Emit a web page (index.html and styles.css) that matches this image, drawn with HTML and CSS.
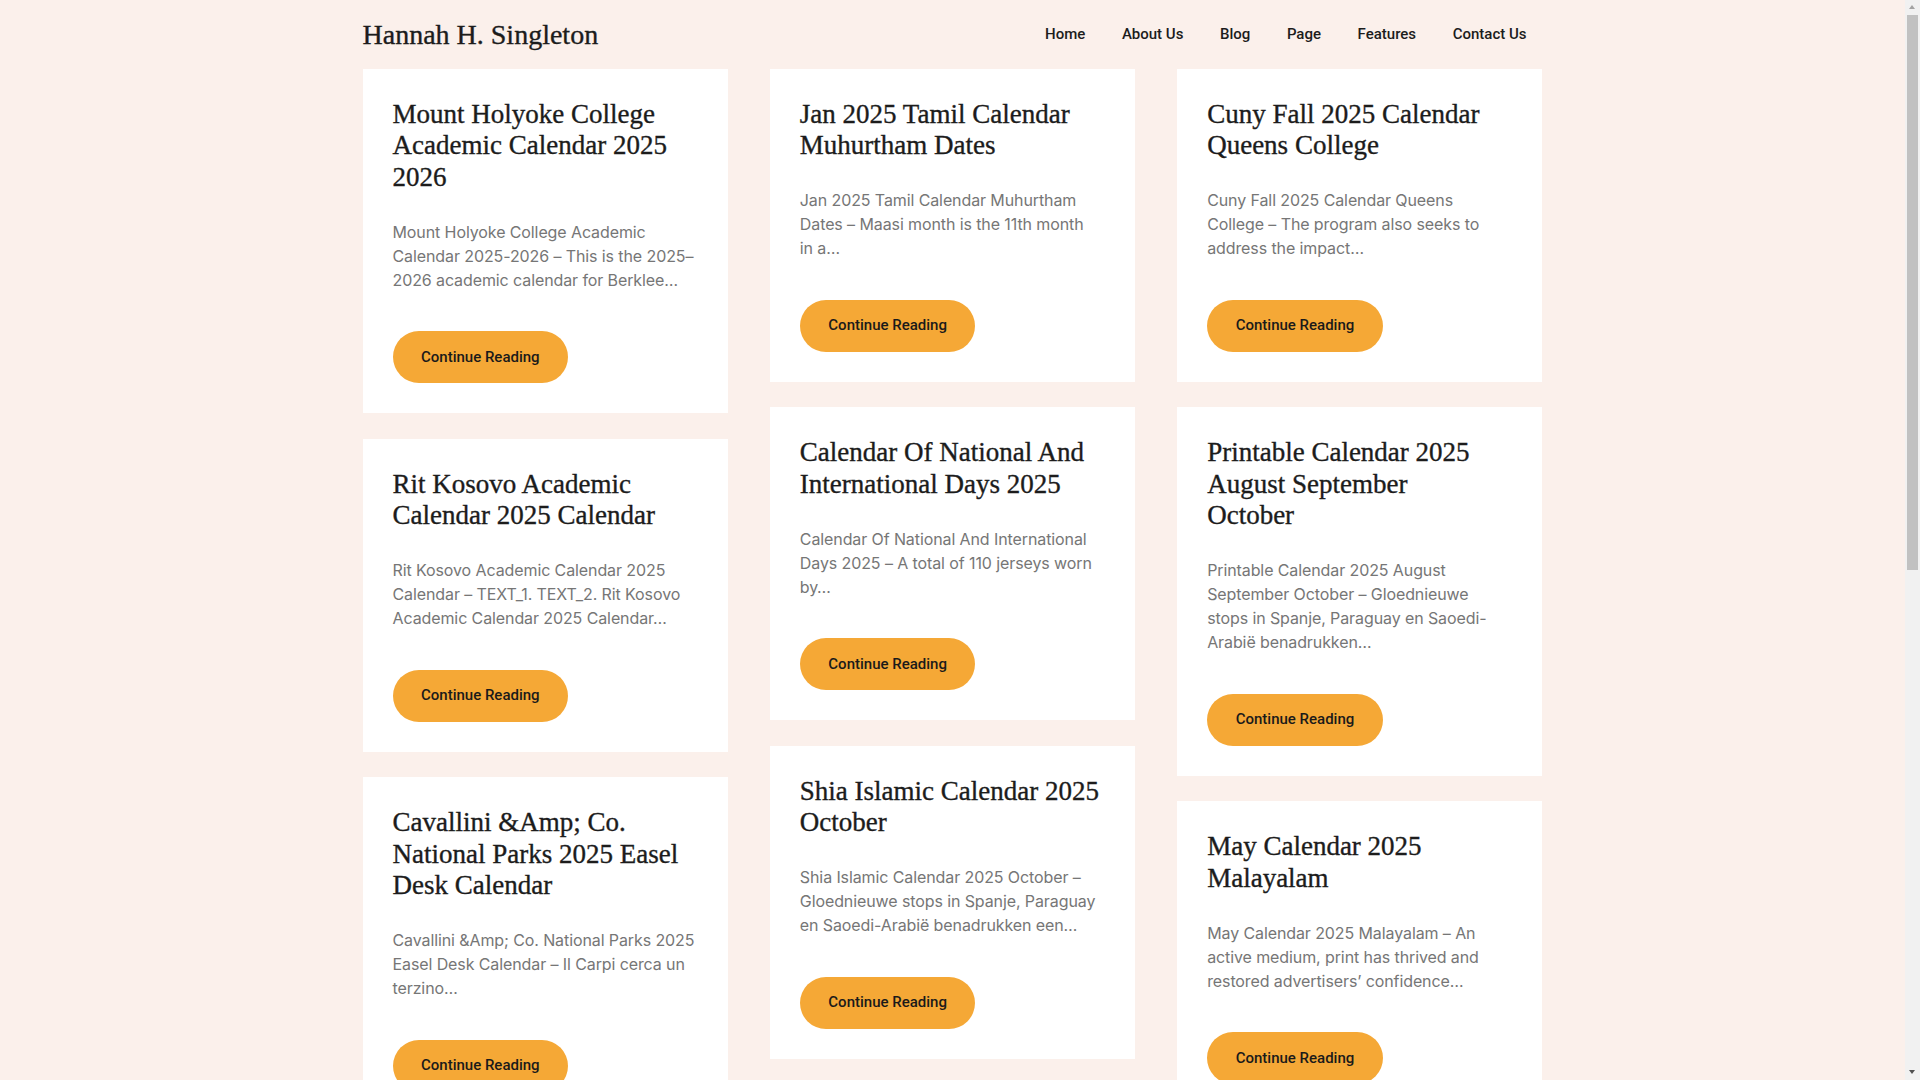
FILE: index.html
```html
<!DOCTYPE html>
<html lang="en">
<head>
<meta charset="utf-8">
<title>Hannah H. Singleton</title>
<link rel="stylesheet" href="styles.css">
</head>
<body>
<header class="site-header">
  <div class="container header-inner">
    <a class="site-title" href="#">Hannah H. Singleton</a>
    <nav class="main-nav">
      <a href="#">Home</a>
      <a href="#">About Us</a>
      <a href="#">Blog</a>
      <a href="#">Page</a>
      <a href="#">Features</a>
      <a href="#">Contact Us</a>
    </nav>
  </div>
</header>
<main class="container posts">
  <div class="col">
    <article class="card">
      <h2 class="card-title">Mount Holyoke College Academic Calendar 2025 2026</h2>
      <p class="excerpt">Mount Holyoke College Academic Calendar 2025-2026 – This is the 2025–2026 academic calendar for Berklee…</p>
      <a class="btn" href="#">Continue Reading</a>
    </article>
    <article class="card">
      <h2 class="card-title">Rit Kosovo Academic Calendar 2025 Calendar</h2>
      <p class="excerpt">Rit Kosovo Academic Calendar 2025 Calendar – TEXT_1. TEXT_2. Rit Kosovo Academic Calendar 2025 Calendar…</p>
      <a class="btn" href="#">Continue Reading</a>
    </article>
    <article class="card">
      <h2 class="card-title">Cavallini &amp;Amp; Co. National Parks 2025 Easel Desk Calendar</h2>
      <p class="excerpt">Cavallini &amp;Amp; Co. National Parks 2025 Easel Desk Calendar – Il Carpi cerca un terzino…</p>
      <a class="btn" href="#">Continue Reading</a>
    </article>
  </div>
  <div class="col">
    <article class="card">
      <h2 class="card-title">Jan 2025 Tamil Calendar Muhurtham Dates</h2>
      <p class="excerpt">Jan 2025 Tamil Calendar Muhurtham Dates – Maasi month is the 11th month<br>in a…</p>
      <a class="btn" href="#">Continue Reading</a>
    </article>
    <article class="card">
      <h2 class="card-title">Calendar Of National And International Days 2025</h2>
      <p class="excerpt">Calendar Of National And International Days 2025 – A total of 110 jerseys worn by…</p>
      <a class="btn" href="#">Continue Reading</a>
    </article>
    <article class="card">
      <h2 class="card-title">Shia Islamic Calendar 2025 October</h2>
      <p class="excerpt">Shia Islamic Calendar 2025 October – Gloednieuwe stops in Spanje, Paraguay en Saoedi-Arabië benadrukken een…</p>
      <a class="btn" href="#">Continue Reading</a>
    </article>
  </div>
  <div class="col">
    <article class="card">
      <h2 class="card-title">Cuny Fall 2025 Calendar Queens College</h2>
      <p class="excerpt">Cuny Fall 2025 Calendar Queens College – The program also seeks to address the impact…</p>
      <a class="btn" href="#">Continue Reading</a>
    </article>
    <article class="card">
      <h2 class="card-title">Printable Calendar 2025 August September<br>October</h2>
      <p class="excerpt">Printable Calendar 2025 August September October – Gloednieuwe stops in Spanje, Paraguay en Saoedi-Arabië benadrukken…</p>
      <a class="btn" href="#">Continue Reading</a>
    </article>
    <article class="card">
      <h2 class="card-title">May Calendar 2025 Malayalam</h2>
      <p class="excerpt">May Calendar 2025 Malayalam – An active medium, print has thrived and restored advertisers’ confidence…</p>
      <a class="btn" href="#">Continue Reading</a>
    </article>
  </div>
</main>
<div class="scrollbar" aria-hidden="true">
  <span class="arrow arrow-up"></span>
  <span class="thumb"></span>
  <span class="arrow arrow-down"></span>
</div>
</body>
</html>
```

FILE: styles.css
```css
body {
  margin: 0;
  padding-right: 15px;
  background: #fbf0eb;
  color: #222222;
  font-family: Inter, "Noto Sans", sans-serif;
  font-size: 16px;
  line-height: 1.5;
}
a {
  text-decoration: none;
  color: inherit;
}
.container {
  width: 1180px;
  margin: 0 auto;
}
.site-header {
  height: 68.5px;
}
.header-inner {
  height: 100%;
  display: flex;
  align-items: center;
  justify-content: space-between;
}
.site-title {
  font-family: "Liberation Serif", "Times New Roman", serif;
  font-size: 28px;
  line-height: 1;
  color: #1c1c1c;
  padding-top: 1px;
  -webkit-text-stroke: 0.35px #1c1c1c;
}
.main-nav {
  display: flex;
  align-items: center;
}
.main-nav a {
  font-family: Roboto, "Liberation Sans", sans-serif;
  font-weight: 500;
  font-size: 15px;
  color: #1c1c1c;
  padding: 0 18.3px;
  line-height: 20px;
}
.main-nav a:first-child {
  padding-left: 0;
}
.main-nav a:last-child {
  padding-right: 16px;
}
.posts {
  display: flex;
  gap: 42px;
  align-items: flex-start;
  padding-bottom: 40px;
}
.col {
  flex: 1 1 0;
  display: flex;
  flex-direction: column;
  gap: 25.5px;
  min-width: 0;
}
.card {
  background: #ffffff;
  padding: 30px;
}
.card-title {
  margin: 0;
  font-family: "Liberation Serif", "Times New Roman", serif;
  font-weight: 400;
  font-size: 27px;
  line-height: 31.5px;
  color: #1c1c1c;
  -webkit-text-stroke: 0.35px #1c1c1c;
}
.excerpt {
  margin: 26.5px 0 0;
  color: #767676;
  font-size: 16px;
  line-height: 24px;
  letter-spacing: -0.1px;
}
.btn {
  display: inline-block;
  margin-top: 39.5px;
  background: #f5a836;
  color: #1a1a1a;
  font-family: Roboto, "Liberation Sans", sans-serif;
  font-weight: 500;
  font-size: 15px;
  line-height: 19px;
  padding: 16.5px 28.5px;
  border-radius: 999px;
}
.scrollbar {
  position: fixed;
  top: 0;
  right: 0;
  width: 15px;
  height: 100vh;
  background: #f1f1f1;
}
.thumb {
  position: absolute;
  left: 2px;
  top: 15px;
  width: 11px;
  height: 555px;
  background: #c1c1c1;
}
.arrow {
  position: absolute;
  left: 4px;
  width: 0;
  height: 0;
  border-left: 3.5px solid transparent;
  border-right: 3.5px solid transparent;
}
.arrow-up {
  top: 5px;
  border-bottom: 4px solid #a3a3a3;
}
.arrow-down {
  bottom: 6px;
  border-top: 4px solid #505050;
}
```
